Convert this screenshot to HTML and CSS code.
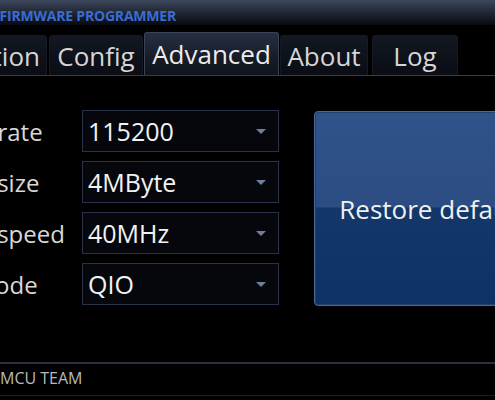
FILE: index.html
```html
<!DOCTYPE html>
<html lang="en">
<head>
    <meta charset="UTF-8">
    <meta name="viewport" content="width=device-width, initial-scale=1.0">
    <title>NodeMCU Firmware Programmer</title>
    <link rel="stylesheet" href="styles.css">
</head>
<body>
    <div class="window">
        <div class="titlebar">
            <span class="app-title">NODEMCU FIRMWARE PROGRAMMER</span>
        </div>

        <div class="tabs">
            <div class="tab tab-operation">Operation</div>
            <div class="tab tab-config">Config</div>
            <div class="tab tab-advanced active">Advanced</div>
            <div class="tab tab-about">About</div>
            <div class="tab tab-log">Log</div>
        </div>

        <div class="content">
            <div class="settings">
                <label class="setting-label">Baud rate</label>
                <div class="combo"><span>115200</span><span class="arrow"></span></div>

                <label class="setting-label">Flash size</label>
                <div class="combo"><span>4MByte</span><span class="arrow"></span></div>

                <label class="setting-label">Flash speed</label>
                <div class="combo"><span>40MHz</span><span class="arrow"></span></div>

                <label class="setting-label">SPI Mode</label>
                <div class="combo"><span>QIO</span><span class="arrow"></span></div>
            </div>

            <button class="restore-btn">Restore default</button>
        </div>

        <div class="statusbar">NODEMCU TEAM</div>
    </div>
</body>
</html>
```

FILE: styles.css
```css
body {
    margin: 0;
    background-color: #000;
    font-family: 'Open Sans', 'Noto Sans', sans-serif;
    width: 495px;
    height: 400px;
    overflow: hidden;
}

.window {
    margin-left: -100px;
    width: 660px;
    height: 400px;
    background-color: #000;
}

.titlebar {
    height: 25px;
    padding-left: 24px;
    box-sizing: border-box;
    background: linear-gradient(to bottom, #3e485c 0%, #283040 35%, #080a10 100%);
}

.app-title {
    display: block;
    padding-top: 8px;
    font-size: 14px;
    font-weight: bold;
    color: #3a6cd4;
    line-height: 16px;
    letter-spacing: -0.2px;
}

.tabs {
    display: flex;
    align-items: flex-end;
    height: 43px;
    margin-top: 7px;
    padding-left: 7px;
    border-bottom: 1px solid #363c4a;
}

.tab {
    height: 40px;
    display: flex;
    align-items: center;
    justify-content: center;
    font-size: 26px;
    color: #d6d6d6;
    background: linear-gradient(to bottom, #121722 0%, #0a0d14 100%);
    border: 1px solid #141923;
    border-bottom: none;
    border-radius: 3px 3px 0 0;
    box-sizing: border-box;
}

.tab-operation {
    width: 140px;
    justify-content: flex-end;
    padding-right: 6px;
}

.tab-config {
    width: 94px;
    margin-left: 2px;
}

.tab-advanced {
    width: 135px;
    margin-left: 1px;
}

.tab-about {
    width: 88px;
    margin-left: 1px;
}

.tab-log {
    width: 86px;
    margin-left: 4px;
}

.tab.active {
    height: 43px;
    color: #ececec;
    background: linear-gradient(to bottom, #273042 0%, #161b26 60%, #10141c 100%);
    border: 1px solid #3a4354;
    border-bottom: none;
}

.content {
    display: flex;
    align-items: flex-start;
    padding-top: 34px;
    padding-left: 33px;
    height: 252px;
}

.settings {
    display: grid;
    grid-template-columns: 149px 197px;
    row-gap: 9px;
    align-items: center;
}

.setting-label {
    font-size: 24px;
    color: #d8d8d8;
    white-space: nowrap;
}

.combo {
    height: 42px;
    box-sizing: border-box;
    border: 1px solid #2a3247;
    background-color: #05070c;
    display: flex;
    align-items: center;
    justify-content: space-between;
    padding: 0 12px 0 5px;
    font-size: 25px;
    color: #f2f2f2;
}

.arrow {
    width: 0;
    height: 0;
    border-left: 5px solid transparent;
    border-right: 5px solid transparent;
    border-top: 5px solid #6d7f9c;
}

.restore-btn {
    margin-left: 35px;
    margin-top: 1px;
    width: 236px;
    height: 195px;
    padding: 0;
    font-family: inherit;
    font-size: 26px;
    color: #f0f0f0;
    border: 1px solid #4a6899;
    border-radius: 4px;
    background: linear-gradient(to bottom, #30538a 0%, #2b4d82 49%, #133769 50%, #0f3265 100%);
    box-shadow: inset 0 0 0 1px #21406e;
    cursor: pointer;
}

.statusbar {
    border-top: 2px solid #2a313d;
    border-bottom: 1px solid #1a1f28;
    height: 34px;
    padding-left: 55px;
    padding-bottom: 3px;
    box-sizing: border-box;
    display: flex;
    align-items: center;
    font-size: 16px;
    color: #b9b9b9;
}
```
